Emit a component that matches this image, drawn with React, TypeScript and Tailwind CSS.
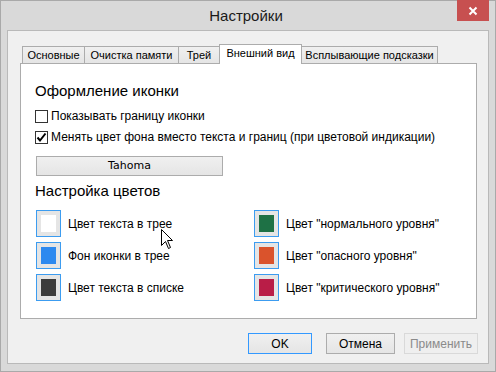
import React from 'react';

const font = { fontFamily: '"Liberation Sans", Arial, sans-serif' };

const tabs = [
  { label: 'Основные', w: 'w-[63px]' },
  { label: 'Очистка памяти', w: 'w-[95px]' },
  { label: 'Трей', w: 'w-[42px]' },
  { label: 'Внешний вид', w: 'w-[83px]', active: true },
  { label: 'Всплывающие подсказки', w: 'w-[137px]' },
];

const colorsLeft = [
  { label: 'Цвет текста в трее', color: 'bg-[#ffffff]' },
  { label: 'Фон иконки в трее', color: 'bg-[#2d89ef]' },
  { label: 'Цвет текста в списке', color: 'bg-[#3c3c3c]' },
];

const colorsRight = [
  { label: 'Цвет "нормального уровня"', color: 'bg-[#1e7145]' },
  { label: 'Цвет "опасного уровня"', color: 'bg-[#da532c]' },
  { label: 'Цвет "критического уровня"', color: 'bg-[#b91d47]' },
];

const Swatch = ({ label, color }: { label: string; color: string }) => (
  <div className="flex items-center h-[27px]">
    <div className="w-[25px] h-[27px] border border-[#3c9cf0] bg-[#e5e5e5] flex items-center justify-center">
      <div className={`w-[15px] h-[17px] ${color}`} />
    </div>
    <span className="ml-[7px] text-[12px] text-black whitespace-nowrap">{label}</span>
  </div>
);

const Checkbox = ({ checked, label }: { checked?: boolean; label: string }) => (
  <div className="flex items-center h-[16px]">
    <div className="w-[13px] h-[13px] border border-[#333333] bg-white flex items-center justify-center">
      {checked && (
        <svg width="11" height="11" viewBox="0 0 11 11">
          <path d="M1.5 5.5 L4 8.5 L9.5 1.5" fill="none" stroke="#000" strokeWidth="2" />
        </svg>
      )}
    </div>
    <span className="ml-[3px] text-[12px] text-black whitespace-nowrap">{label}</span>
  </div>
);

const Button = ({ label, w, variant }: { label: string; w: string; variant?: 'default' | 'disabled' }) => {
  const look =
    variant === 'default'
      ? 'border-[#3399ff] bg-linear-to-b from-[#f0f0f0] to-[#e5e5e5] text-black'
      : variant === 'disabled'
      ? 'border-[#d9d9d9] bg-[#efefef] text-[#8a8a8a]'
      : 'border-[#acacac] bg-linear-to-b from-[#f0f0f0] to-[#e5e5e5] text-black';
  return (
    <div className={`${w} h-[21px] border ${look} flex items-center justify-center text-[12px]`}>
      {label}
    </div>
  );
};

export default function App() {
  return (
    <div style={font} className="relative w-[496px] h-[372px] bg-[#d9d9d9] border border-[#a9a9a9] flex flex-col pl-[6px] pr-[6px] pb-[7px]">
      {/* Title bar */}
      <div className="h-[29px] flex items-center justify-center">
        <span className="text-[15px] text-[#1a1a1a] -ml-[4px] mt-[1px]">Настройки</span>
      </div>
      <div className="absolute -top-px right-[6px] w-[32px] h-[21px] bg-[#c75050] flex items-center justify-center">
        <svg width="10" height="10" viewBox="0 0 10 10">
          <path d="M1.5 1.5 L8.5 8.5 M8.5 1.5 L1.5 8.5" stroke="#fff" strokeWidth="2" />
        </svg>
      </div>

      {/* Client area */}
      <div className="flex-1 bg-[#f0f0f0] border border-[#b9b9b9] flex flex-col">
        <div className="ml-[12px] mt-[13px] w-[457px] flex flex-col">
          {/* Tabs */}
          <div className="flex items-end ml-[2px] -mb-px relative z-10 h-[20px]">
            {tabs.map((t, i) =>
              t.active ? (
                <div
                  key={t.label}
                  className={`${t.w} h-[20px] -ml-px bg-white border border-b-0 border-[#acacac] flex items-center justify-center pb-[2px] text-[11px] text-black whitespace-nowrap`}
                >
                  {t.label}
                </div>
              ) : (
                <div
                  key={t.label}
                  className={`${t.w} h-[18px] ${i > 0 ? '-ml-px' : ''} bg-linear-to-b from-[#f0f0f0] to-[#e5e5e5] border border-[#acacac] flex items-center justify-center text-[11px] text-black whitespace-nowrap`}
                >
                  {t.label}
                </div>
              )
            )}
          </div>

          {/* Panel */}
          <div className="h-[256px] bg-white border border-[#acacac] flex flex-col pl-[14px]">
            <div className="mt-[17px] h-[20px] leading-[20px] text-[15px] text-black">Оформление иконки</div>
            <div className="mt-[7px]">
              <Checkbox label="Показывать границу иконки" />
            </div>
            <div className="mt-[5px]">
              <Checkbox checked label="Менять цвет фона вместо текста и границ (при цветовой индикации)" />
            </div>
            <div className="mt-[11px] ml-px w-[187px] h-[20px] border border-[#acacac] bg-linear-to-b from-[#f0f0f0] to-[#e5e5e5] flex items-center justify-center">
              <span className="text-[11px] text-black" style={{ fontFamily: '"DejaVu Sans", Verdana, sans-serif' }}>
                Tahoma
              </span>
            </div>
            <div className="mt-[5px] h-[20px] leading-[20px] text-[15px] text-black">Настройка цветов</div>
            <div className="mt-[9px] ml-px grid grid-cols-[218px_1fr] gap-y-[5px]">
              {colorsLeft.map((c, i) => (
                <React.Fragment key={c.label}>
                  <Swatch label={c.label} color={c.color} />
                  <Swatch label={colorsRight[i].label} color={colorsRight[i].color} />
                </React.Fragment>
              ))}
            </div>
          </div>
        </div>

        {/* Dialog buttons */}
        <div className="mt-[14px] flex justify-end pr-[10px]">
          <Button label="OK" w="w-[64px]" variant="default" />
          <div className="ml-[14px]">
            <Button label="Отмена" w="w-[69px]" />
          </div>
          <div className="ml-[9px]">
            <Button label="Применить" w="w-[74px]" variant="disabled" />
          </div>
        </div>
      </div>

      {/* Mouse cursor */}
      <svg className="absolute left-[160px] top-[228px]" width="13" height="21" viewBox="0 0 13 21">
        <path d="M0.5 0.5 L0.5 16.5 L4.5 12.5 L7.5 19.5 L9.5 18.5 L6.5 11.5 L11.5 11.5 Z" fill="#fff" stroke="#000" strokeWidth="1" />
      </svg>
    </div>
  );
}
